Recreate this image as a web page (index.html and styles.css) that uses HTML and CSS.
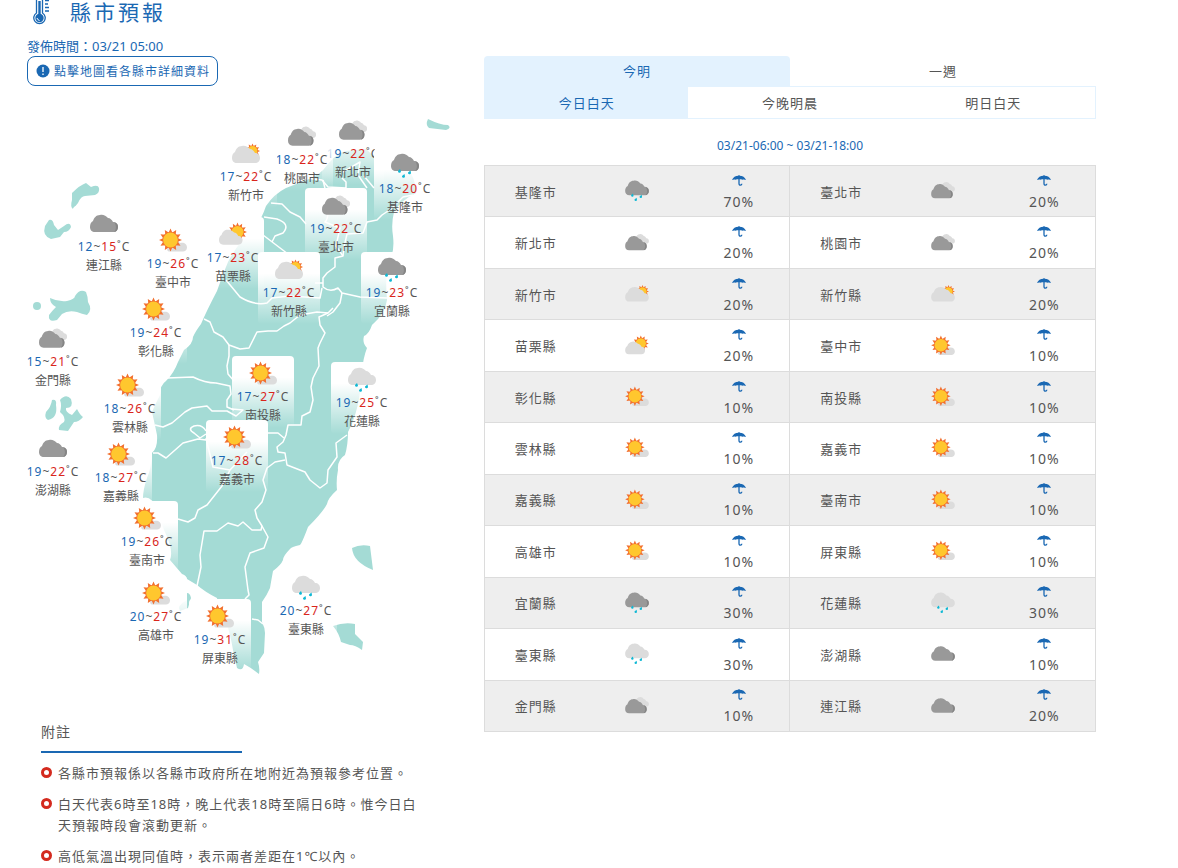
FILE: index.html
```html
<!DOCTYPE html>
<html lang="zh-Hant">
<head>
<meta charset="utf-8">
<title>縣市預報</title>
<link rel="stylesheet" href="styles.css">
</head>
<body>
<svg class="sprite" aria-hidden="true">
  <defs>
    <path id="cloud-shape" d="M5 18C2 18 0 16 0 13C0 10 1 8 3 7C4 4 6 1 10 1C13 0 16 2 18 4C20 4 22 6 23 8C26 8 28 10 28 13C28 16 26 18 23 18Z"/>
    <path id="cloud-edge" d="M24.500 8.500C27 9 28 10.500 28 13C28 16 26 18 24 18C26.500 15.500 26.500 11.500 24.500 8.500Z"/>
    <g id="sun-shape">
      <polygon fill="#f2702f" points="0,-11.5 1.8,-7.4 5.7,-10 5.2,-5.2 10,-5.7 7.4,-1.8 11.5,0 7.4,1.8 10,5.7 5.2,5.2 5.7,10 1.8,7.4 0,11.5 -1.8,7.4 -5.7,10 -5.2,5.2 -10,5.7 -7.4,1.8 -11.5,0 -7.4,-1.8 -10,-5.7 -5.2,-5.2 -5.7,-10 -1.8,-7.4"/>
      <circle r="8" fill="#f2702f"/>
      <circle r="7.4" fill="#ffc72e"/>
    </g>
    <g id="drops" fill="#0fb8d4">
      <path d="M9 16l1 2.500a1.500 1.500 0 1 1-3-.5z"/>
      <path d="M19.500 17.500l.5 2.500a1.500 1.500 0 1 1-3-.5z"/>
      <path d="M13.500 21l.5 2.500a1.500 1.500 0 1 1-3-.5z"/>
    </g>
  </defs>
  <symbol id="overcast" viewBox="0 0 28 26">
    <use href="#cloud-shape" y="3" fill="#999"/><use href="#cloud-edge" y="3" fill="#858585"/>
  </symbol>
  <symbol id="rain-dark" viewBox="0 0 28 26">
    <use href="#cloud-shape" fill="#999"/><use href="#cloud-edge" fill="#858585"/><use href="#drops"/>
  </symbol>
  <symbol id="rain-light" viewBox="0 0 28 26">
    <use href="#cloud-shape" fill="#dcdcdc"/><use href="#drops"/>
  </symbol>
  <symbol id="cloudy" viewBox="0 0 28 26">
    <g transform="translate(11 2) scale(.61 .66)"><use href="#cloud-shape" fill="#dcdcdc"/></g>
    <g transform="translate(0 4) scale(.91 .98)"><use href="#cloud-shape" fill="#999"/><use href="#cloud-edge" fill="#858585"/></g>
  </symbol>
  <symbol id="partly" viewBox="0 0 28 26">
    <g transform="translate(20.500 10) scale(.66)"><use href="#sun-shape"/></g>
    <use href="#cloud-shape" y="4" fill="#dcdcdc"/>
  </symbol>
  <symbol id="partly-sun" viewBox="0 0 28 26">
    <g transform="translate(18.500 10) scale(.82)"><use href="#sun-shape"/></g>
    <g transform="translate(0 7) scale(.84 .87)"><use href="#cloud-shape" fill="#dcdcdc"/></g>
  </symbol>
  <symbol id="sunny" viewBox="0 0 28 26">
    <path fill="#dcdcdc" d="M10 23.500C7 23 8 19 11 19C14 13 19 13 21 15C25 14 28 16 28 19.500C28 22 26 23.500 24 23.500Z"/>
    <use href="#sun-shape" x="11.500" y="12"/>
  </symbol>
  <symbol id="umbrella" viewBox="0 0 14 11">
    <path fill="#1a68b3" d="M0 5C1 2 3.500 .8 6.500.7V0h1v.7C10.500 .8 13 2 14 5C12.500 4.300 11.500 4.300 10.500 4.800C9 4.200 5 4.200 3.500 4.800C2.500 4.300 1.500 4.300 0 5Z"/>
    <path fill="none" stroke="#1a68b3" stroke-width="1.300" d="M7 4v4.500q0 1.700 1.500 1.600q1.300-.1 1.300-1.400"/>
  </symbol>
</svg>

<main class="page">
  <section class="overview">
    <h1 class="title">
      <svg class="title-icon" viewBox="0 0 18 32" aria-hidden="true">
        <g fill="none" stroke="#1a68b3">
          <path stroke-width="1.300" d="M4.500 20V4q0-3 3-3t3 3v16a5.700 5.700 0 1 1-6 0z"/>
          <path stroke-width="1.300" d="M13 4h4M13 7.500h4M13 11h3M13 14.500h4M13 18h4"/>
        </g>
        <circle cx="7.500" cy="25" r="4.200" fill="#1a68b3"/>
        <path fill="#1a68b3" d="M6.300 8h2.400v14H6.300z"/>
        <path fill="none" stroke="#fff" d="M5 25q.5 2 2.500 2.500"/>
      </svg>縣市預報</h1>
    <p class="issued">發佈時間：03/21 05:00</p>
    <button class="hint" type="button">
      <svg class="hint-icon" viewBox="0 0 14 14" aria-hidden="true"><circle cx="7" cy="7" r="6.500" fill="#1a68b3"/><path stroke="#fff" stroke-width="1.300" d="M7 3v5M7 9.500V11"/></svg>點擊地圖看各縣市詳細資料</button>

    <div class="map">
      <svg class="map-shape" viewBox="27 108 430 572" aria-hidden="true">
        <g fill="#a4dbd5">
          <path d="M228 262Q238 242 255 228Q262 218 266 206Q274 194 286 188L304 181Q320 176 328 164Q337 153 346 151L366 149Q374 157 385 162L406 166Q416 178 416 193Q400 201 394 212Q391 224 393 236Q395 254 388 262Q385 278 387 300Q385 314 372 325Q369 334 364 336Q362 343 367 348Q363 358 362 372Q360 410 348 432Q348 445 345 455Q337 460 338 470Q336 480 337 490Q328 498 327 504Q323 512 308 527Q302 543 300 545Q291 547 290 549Q283 556 283 560Q281 565 273 571Q271 582 270 588Q267 595 262 602V622Q265 628 265 633L264 653L258 662Q260 668 259 674Q253 669 244 664Q243 672 237 668L233 650Q228 620 218 605L217 598Q205 592 197 585L187 579Q186 575 182 574L170 560Q174 550 164 530L158 510Q151 495 143 498Q143 490 147 478Q151 470 152 453Q158 448 157 435Q155 425 152 412Q155 405 160 395Q160 385 166 381Q174 373 178 362L184 350Q193 344 193 337Q195 332 201 324Q207 310 217 291Q222 276 228 262Z"/>
          <path d="M428 119Q440 125 448 125Q452 128 446 130L429 128Q425 125 428 119Z"/>
          <path d="M72 193Q80 185 86 183L91 187Q98 184 99 188Q100 193 95 195L85 196Q81 196 78 203L73 209Q70 207 72 200Z"/>
          <path d="M49 220Q53 219 54 225L58 230L64 226Q70 221 71 227Q69 232 64 232L60 237L51 239Q42 236 45 226Z"/>
          <circle cx="37" cy="306" r="4"/>
          <path d="M50 298Q58 302 67 301Q75 299 75 296Q80 288 86 292Q88 297 88 302Q93 310 87 315Q82 314 77 312Q68 310 62 314L57 320Q48 323 49 315Q52 311 56 307Q50 304 50 298Z"/>
          <path d="M52 400Q57 399 56 405Q58 418 48 420Q44 418 46 412Q51 407 52 400Z"/>
          <path d="M60 400Q66 393 71 399Q74 408 66 408Q65 412 72 415L77 409Q80 415 83 417Q79 422 74 422L68 431L59 430Q58 425 64 422Q66 417 60 412Q62 405 60 400Z"/>
          <path d="M352 548Q360 544 370 546L373 570Q353 562 352 548Z"/>
          <path d="M333 626Q344 622 355 624L355 634L363 642L362 650Q355 645 350 645L341 642Q339 633 333 626Z"/>
          <path d="M187 593Q190 593 191 598L188 608L180 611Q176 606 187 600Z"/>
        </g>
        <g fill="none" stroke="#fff" stroke-width="1.500" stroke-linejoin="round">
          <path d="M271 203L282 204L290 212L300 217L306 224"/>
          <path d="M264 217L277 219Q291 224 283 233L275 236L272 242M263 235L288 254"/>
          <path d="M306 178L322 180L328 187L346 188V182L342 178M343 172L360 162L358 175L367 188M364 176L374 188"/>
          <path d="M413 195L403 197L391 209L382 215L377 220L367 222L363 233L347 234L344 247L343 256L335 258V267L327 273L323 278V287Q330 293 338 288L342 293L360 297L387 298"/>
          <path d="M323 180Q332 216 325 222L340 228L336 246L343 256M315 283H323M342 293L340 303L333 312L327 316"/>
          <path d="M226 280L240 297Q255 306 267 303L272 298L290 296L320 298L322 288"/>
          <path d="M204 319L210 322L214 332L223 337L229 345L240 349L249 348L257 332L268 331L277 331L284 326L290 323L300 315L317 312L328 313L333 308"/>
          <path d="M229 345L229 356L227 366L228 374L234 381M167 378L193 377Q205 383 216 383L230 386L231 394L227 400V407L234 410"/>
          <path d="M328 313L319 317L320 325L325 333L320 343L318 348L319 366L313 378L311 387L313 400L310 412L302 416L301 425H288L286 435L283 442L277 447L278 452L285 453L287 465L305 472L310 480L320 488L327 483L328 470L337 457L336 443L347 435"/>
          <path d="M155 425L163 427L172 423L185 412L192 408L207 406L212 411L227 411L236 416L243 410L232 409"/>
          <path d="M153 453L158 453L166 458L183 443L198 439L206 440M206 431Q202 424 194 426Q187 429 194 433L200 438L206 434M206 438L213 467L230 470L247 452M230 470L222 486L207 505L198 510L195 518L188 522L178 519M268 433L278 433L284 438"/>
          <path d="M285 460L275 462L267 468L263 480L266 490L262 502L255 510L257 518L262 526L261 530L252 530L243 522L238 526L228 523L217 531H204L200 555L201 567L197 586"/>
          <path d="M262 526L268 537L264 548L250 553L245 567L248 590L249 595L245 599M252 619L258 620L263 624"/>
        </g>
      </svg>
      <a class="pin" href="#" style="left:295px;top:5px"><svg><use href="#cloudy"/></svg><span class="temp"><b class="low">19</b>~<b class="high">22</b>˚C</span><span class="name">新北市</span></a>
      <a class="pin" href="#" style="left:347px;top:40px"><svg><use href="#rain-dark"/></svg><span class="temp"><b class="low">18</b>~<b class="high">20</b>˚C</span><span class="name">基隆市</span></a>
      <a class="pin" href="#" style="left:278px;top:80px"><svg><use href="#cloudy"/></svg><span class="temp"><b class="low">19</b>~<b class="high">22</b>˚C</span><span class="name">臺北市</span></a>
      <a class="pin" href="#" style="left:244px;top:11px"><svg><use href="#cloudy"/></svg><span class="temp"><b class="low">18</b>~<b class="high">22</b>˚C</span><span class="name">桃園市</span></a>
      <a class="pin" href="#" style="left:188px;top:28px"><svg><use href="#partly"/></svg><span class="temp"><b class="low">17</b>~<b class="high">22</b>˚C</span><span class="name">新竹市</span></a>
      <a class="pin" href="#" style="left:175px;top:109px"><svg><use href="#partly-sun"/></svg><span class="temp"><b class="low">17</b>~<b class="high">23</b>˚C</span><span class="name">苗栗縣</span></a>
      <a class="pin" href="#" style="left:231px;top:144px"><svg><use href="#partly"/></svg><span class="temp"><b class="low">17</b>~<b class="high">22</b>˚C</span><span class="name">新竹縣</span></a>
      <a class="pin" href="#" style="left:115px;top:115px"><svg><use href="#sunny"/></svg><span class="temp"><b class="low">19</b>~<b class="high">26</b>˚C</span><span class="name">臺中市</span></a>
      <a class="pin" href="#" style="left:98px;top:184px"><svg><use href="#sunny"/></svg><span class="temp"><b class="low">19</b>~<b class="high">24</b>˚C</span><span class="name">彰化縣</span></a>
      <a class="pin" href="#" style="left:205px;top:248px"><svg><use href="#sunny"/></svg><span class="temp"><b class="low">17</b>~<b class="high">27</b>˚C</span><span class="name">南投縣</span></a>
      <a class="pin" href="#" style="left:72px;top:260px"><svg><use href="#sunny"/></svg><span class="temp"><b class="low">18</b>~<b class="high">26</b>˚C</span><span class="name">雲林縣</span></a>
      <a class="pin" href="#" style="left:63px;top:329px"><svg><use href="#sunny"/></svg><span class="temp"><b class="low">18</b>~<b class="high">27</b>˚C</span><span class="name">嘉義縣</span></a>
      <a class="pin" href="#" style="left:179px;top:312px"><svg><use href="#sunny"/></svg><span class="temp"><b class="low">17</b>~<b class="high">28</b>˚C</span><span class="name">嘉義市</span></a>
      <a class="pin" href="#" style="left:89px;top:393px"><svg><use href="#sunny"/></svg><span class="temp"><b class="low">19</b>~<b class="high">26</b>˚C</span><span class="name">臺南市</span></a>
      <a class="pin" href="#" style="left:98px;top:468px"><svg><use href="#sunny"/></svg><span class="temp"><b class="low">20</b>~<b class="high">27</b>˚C</span><span class="name">高雄市</span></a>
      <a class="pin" href="#" style="left:162px;top:491px"><svg><use href="#sunny"/></svg><span class="temp"><b class="low">19</b>~<b class="high">31</b>˚C</span><span class="name">屏東縣</span></a>
      <a class="pin" href="#" style="left:334px;top:144px"><svg><use href="#rain-dark"/></svg><span class="temp"><b class="low">19</b>~<b class="high">23</b>˚C</span><span class="name">宜蘭縣</span></a>
      <a class="pin" href="#" style="left:304px;top:254px"><svg><use href="#rain-light"/></svg><span class="temp"><b class="low">19</b>~<b class="high">25</b>˚C</span><span class="name">花蓮縣</span></a>
      <a class="pin" href="#" style="left:248px;top:462px"><svg><use href="#rain-light"/></svg><span class="temp"><b class="low">20</b>~<b class="high">27</b>˚C</span><span class="name">臺東縣</span></a>
      <a class="pin" href="#" style="left:-5px;top:323px"><svg><use href="#overcast"/></svg><span class="temp"><b class="low">19</b>~<b class="high">22</b>˚C</span><span class="name">澎湖縣</span></a>
      <a class="pin" href="#" style="left:-5px;top:213px"><svg><use href="#cloudy"/></svg><span class="temp"><b class="low">15</b>~<b class="high">21</b>˚C</span><span class="name">金門縣</span></a>
      <a class="pin" href="#" style="left:46px;top:98px"><svg><use href="#overcast"/></svg><span class="temp"><b class="low">12</b>~<b class="high">15</b>˚C</span><span class="name">連江縣</span></a>
    </div>

    <section class="notes">
      <h2 class="notes-title">附註</h2>
      <ul class="notes-list">
        <li>各縣市預報係以各縣市政府所在地附近為預報參考位置。</li>
        <li>白天代表6時至18時，晚上代表18時至隔日6時。惟今日白天預報時段會滾動更新。</li>
        <li>高低氣溫出現同值時，表示兩者差距在1℃以內。</li>
      </ul>
    </section>
  </section>

  <section class="forecast">
    <div class="tabs"><button class="tab active" type="button">今明</button><button class="tab" type="button">一週</button></div>
    <div class="subtabs"><button class="subtab active" type="button">今日白天</button><button class="subtab" type="button">今晚明晨</button><button class="subtab" type="button">明日白天</button></div>
    <p class="period">03/21-06:00 ~ 03/21-18:00</p>
    <table class="cities">
      <tbody>
        <tr><th scope="row">基隆市</th><td><svg class="sky"><use href="#rain-dark"/></svg></td><td><svg class="rain"><use href="#umbrella"/></svg>70%</td><th scope="row">臺北市</th><td><svg class="sky"><use href="#cloudy"/></svg></td><td><svg class="rain"><use href="#umbrella"/></svg>20%</td></tr>
        <tr><th scope="row">新北市</th><td><svg class="sky"><use href="#cloudy"/></svg></td><td><svg class="rain"><use href="#umbrella"/></svg>20%</td><th scope="row">桃園市</th><td><svg class="sky"><use href="#cloudy"/></svg></td><td><svg class="rain"><use href="#umbrella"/></svg>20%</td></tr>
        <tr><th scope="row">新竹市</th><td><svg class="sky"><use href="#partly"/></svg></td><td><svg class="rain"><use href="#umbrella"/></svg>20%</td><th scope="row">新竹縣</th><td><svg class="sky"><use href="#partly"/></svg></td><td><svg class="rain"><use href="#umbrella"/></svg>20%</td></tr>
        <tr><th scope="row">苗栗縣</th><td><svg class="sky"><use href="#partly-sun"/></svg></td><td><svg class="rain"><use href="#umbrella"/></svg>20%</td><th scope="row">臺中市</th><td><svg class="sky"><use href="#sunny"/></svg></td><td><svg class="rain"><use href="#umbrella"/></svg>10%</td></tr>
        <tr><th scope="row">彰化縣</th><td><svg class="sky"><use href="#sunny"/></svg></td><td><svg class="rain"><use href="#umbrella"/></svg>10%</td><th scope="row">南投縣</th><td><svg class="sky"><use href="#sunny"/></svg></td><td><svg class="rain"><use href="#umbrella"/></svg>10%</td></tr>
        <tr><th scope="row">雲林縣</th><td><svg class="sky"><use href="#sunny"/></svg></td><td><svg class="rain"><use href="#umbrella"/></svg>10%</td><th scope="row">嘉義市</th><td><svg class="sky"><use href="#sunny"/></svg></td><td><svg class="rain"><use href="#umbrella"/></svg>10%</td></tr>
        <tr><th scope="row">嘉義縣</th><td><svg class="sky"><use href="#sunny"/></svg></td><td><svg class="rain"><use href="#umbrella"/></svg>10%</td><th scope="row">臺南市</th><td><svg class="sky"><use href="#sunny"/></svg></td><td><svg class="rain"><use href="#umbrella"/></svg>10%</td></tr>
        <tr><th scope="row">高雄市</th><td><svg class="sky"><use href="#sunny"/></svg></td><td><svg class="rain"><use href="#umbrella"/></svg>10%</td><th scope="row">屏東縣</th><td><svg class="sky"><use href="#sunny"/></svg></td><td><svg class="rain"><use href="#umbrella"/></svg>10%</td></tr>
        <tr><th scope="row">宜蘭縣</th><td><svg class="sky"><use href="#rain-dark"/></svg></td><td><svg class="rain"><use href="#umbrella"/></svg>30%</td><th scope="row">花蓮縣</th><td><svg class="sky"><use href="#rain-light"/></svg></td><td><svg class="rain"><use href="#umbrella"/></svg>30%</td></tr>
        <tr><th scope="row">臺東縣</th><td><svg class="sky"><use href="#rain-light"/></svg></td><td><svg class="rain"><use href="#umbrella"/></svg>30%</td><th scope="row">澎湖縣</th><td><svg class="sky"><use href="#overcast"/></svg></td><td><svg class="rain"><use href="#umbrella"/></svg>10%</td></tr>
        <tr><th scope="row">金門縣</th><td><svg class="sky"><use href="#cloudy"/></svg></td><td><svg class="rain"><use href="#umbrella"/></svg>10%</td><th scope="row">連江縣</th><td><svg class="sky"><use href="#overcast"/></svg></td><td><svg class="rain"><use href="#umbrella"/></svg>20%</td></tr>
      </tbody>
    </table>
  </section>
</main>
</body>
</html>
```
FILE: styles.css
```css
*, *::before { box-sizing: border-box; }
body {
  margin: 0;
  background: #fff;
  color: #555;
  font-family: "Noto Sans", "Noto Sans CJK TC", sans-serif;
  font-size: 13px;
  letter-spacing: 1px;
}
.sprite { position: absolute; width: 0; height: 0; }
h1, h2, p, ul { margin: 0; padding: 0; font-weight: 400; }
button { font: inherit; letter-spacing: inherit; color: inherit; cursor: pointer; }

.page {
  display: grid;
  grid-template-columns: 457px minmax(0, 1fr);
  padding: 0 82px 0 27px;
}

.title {
  display: flex;
  align-items: center;
  gap: 20px;
  height: 24px;
  padding-left: 5px;
  color: #1a68b3;
  font-size: 21px;
  line-height: 24px;
  letter-spacing: 3px;
}
.title-icon { flex: none; width: 18px; height: 32px; margin-top: -6px; }
.issued {
  margin-top: 12px;
  color: #1a68b3;
  line-height: 20px;
  letter-spacing: 0;
}
.hint {
  display: flex;
  align-items: center;
  gap: 4px;
  height: 30px;
  padding: 0 7px 0 8px;
  border: 1px solid #1a68b3;
  border-radius: 8px;
  background: #fff;
  color: #1a68b3;
  font-size: 12px;
}
.hint-icon { width: 14px; height: 14px; }

.map { position: relative; width: 430px; height: 572px; margin-top: 22px; }
.map-shape { display: block; width: 100%; height: 100%; }
.pin {
  position: absolute;
  display: flex;
  flex-direction: column;
  align-items: center;
  width: 62px;
  height: 72px;
  padding-top: 5px;
  border-radius: 4px;
  background: linear-gradient(#fff 30%, rgba(255, 255, 255, 0));
  color: #555;
  font-size: 12px;
  text-decoration: none;
  white-space: nowrap;
}
.pin svg { flex: none; width: 28px; height: 26px; margin-bottom: 1px; }
.temp { line-height: 18px; }
.temp b { font-weight: 400; }
.low { color: #1a68b3; }
.high { color: #d9261c; }
.name { line-height: 20px; letter-spacing: 0; }

.notes { padding: 40px 56px 0 14px; }
.notes-title {
  width: 201px;
  padding-bottom: 7px;
  border-bottom: 2px solid #1a68b3;
  font-size: 14px;
  line-height: 24px;
}
.notes-list {
  display: grid;
  gap: 10px;
  padding-top: 10px;
  list-style: none;
  line-height: 21px;
}
.notes-list li {
  display: grid;
  grid-template-columns: 11px 1fr;
  gap: 6px;
}
.notes-list li::before {
  content: "";
  width: 11px;
  height: 11px;
  margin-top: 4px;
  border: 3px solid #d42a1e;
  border-radius: 50%;
}

.forecast { padding-top: 56px; }
.tabs, .subtabs { display: flex; }
.tab, .subtab { flex: 1; padding: 0; border: 0; background: none; }
.tab { height: 30px; padding-bottom: 2px; border-radius: 4px 4px 0 0; }
.subtabs { height: 33px; border: 1px solid #e3f2fe; }
.active { background: #e3f2fe; color: #1a68b3; }
.period {
  margin: 17px 0 9px;
  color: #1a68b3;
  font-size: 12px;
  line-height: 20px;
  letter-spacing: 0;
  text-align: center;
}
.cities {
  width: 100%;
  height: 567px;
  table-layout: fixed;
  border: 1px solid #dcdcdc;
  border-collapse: collapse;
  text-align: center;
}
.cities tr { border-bottom: 1px solid #dcdcdc; }
.cities tr:nth-child(odd) { background: #eee; }
.cities th, .cities td { padding: 0; font-weight: 400; }
.cities th:nth-child(4) { border-left: 1px solid #dcdcdc; }
.cities td { font-size: 14px; line-height: 20px; }
.sky { display: block; width: 24px; height: 22px; margin: 0 auto; }
.rain { display: block; width: 14px; height: 11px; margin: 4px auto 6px; }
```
